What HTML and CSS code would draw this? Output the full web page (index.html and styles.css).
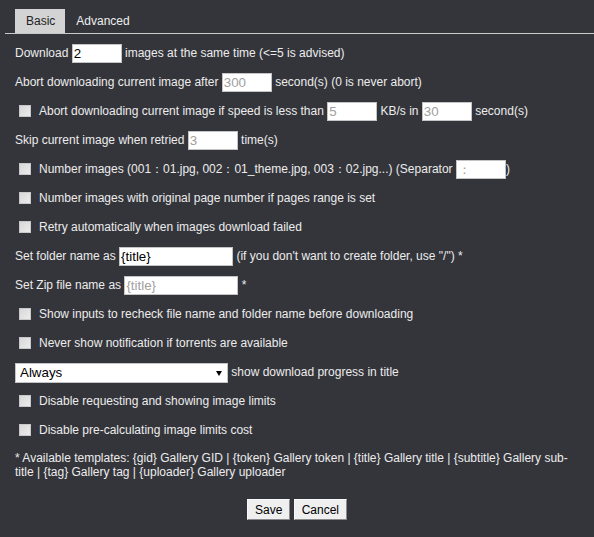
FILE: index.html
```html
<!DOCTYPE html>
<html>
<head>
<meta charset="utf-8">
<link rel="stylesheet" href="styles.css">
</head>
<body>
<div class="tabs">
  <span class="tab active">Basic</span><span class="tab">Advanced</span>
</div>
<div class="content">
  <div class="row">Download <input class="txt" type="text" value="2"> images at the same time (&lt;=5 is advised)</div>
  <div class="row">Abort downloading current image after <input class="txt" type="text" placeholder="300"> second(s) (0 is never abort)</div>
  <div class="row"><input class="cb" type="checkbox">Abort downloading current image if speed is less than <input class="txt" type="text" placeholder="5"> KB/s in <input class="txt" type="text" placeholder="30"> second(s)</div>
  <div class="row">Skip current image when retried <input class="txt" type="text" placeholder="3"> time(s)</div>
  <div class="row"><input class="cb" type="checkbox">Number images (001：01.jpg, 002：01_theme.jpg, 003：02.jpg...) (Separator <input class="txt" type="text" placeholder="：">)</div>
  <div class="row"><input class="cb" type="checkbox">Number images with original page number if pages range is set</div>
  <div class="row"><input class="cb" type="checkbox">Retry automatically when images download failed</div>
  <div class="row">Set folder name as <input class="txt wide" type="text" value="{title}"> (if you don't want to create folder, use "/") *</div>
  <div class="row">Set Zip file name as <input class="txt wide" type="text" placeholder="{title}"> *</div>
  <div class="row"><input class="cb" type="checkbox">Show inputs to recheck file name and folder name before downloading</div>
  <div class="row"><input class="cb" type="checkbox">Never show notification if torrents are available</div>
  <div class="row"><span class="sel"><select><option>Always</option></select></span> show download progress in title</div>
  <div class="row"><input class="cb" type="checkbox">Disable requesting and showing image limits</div>
  <div class="row"><input class="cb" type="checkbox">Disable pre-calculating image limits cost</div>
  <div class="note">* Available templates: {gid} Gallery GID | {token} Gallery token | {title} Gallery title | {subtitle} Gallery sub-title | {tag} Gallery tag | {uploader} Gallery uploader</div>
  <div class="buttons"><button class="btn">Save</button> <button class="btn">Cancel</button></div>
</div>
</body>
</html>
```
FILE: styles.css
```css
html, body {
  margin: 0;
  padding: 0;
  background: #34353b;
}
body {
  font-family: "Liberation Sans", Arial, sans-serif;
  font-size: 12px;
  color: #ececec;
  height: 537px;
}
.tabs {
  display: flex;
  margin-left: 5px;
  padding: 9px 0 0 10px;
  border-bottom: 1px solid #c9c9c9;
}
.tab {
  display: block;
  height: 24px;
  line-height: 24px;
  padding: 0 10px 0 11px;
  color: #eeeeee;
}
.tab.active {
  background: #d3d3d3;
  color: #222222;
}
.content {
  padding: 1px 15px 0;
}
.row {
  height: 21px;
  line-height: 21px;
  margin-top: 8px;
  white-space: nowrap;
}
.txt {
  box-sizing: border-box;
  width: 50px;
  height: 19px;
  margin: 0;
  padding: 0 1px;
  border: 1px solid #c4c4c4;
  background: #ffffff;
  color: #000000;
  font-family: "Liberation Sans", Arial, sans-serif;
  font-size: 13.33px;
  vertical-align: middle;
  outline: none;
}
.txt::placeholder {
  color: #a0a0a0;
}
.txt.wide {
  width: 114px;
}
.cb {
  -webkit-appearance: none;
  appearance: none;
  box-sizing: border-box;
  width: 12px;
  height: 12px;
  margin: 0 8px 0 4px;
  border: 1px solid #c8c8c8;
  background: linear-gradient(135deg, #d8d8d8, #ececec);
  vertical-align: middle;
  position: relative;
  top: -1px;
}
.sel {
  display: inline-block;
  position: relative;
  vertical-align: middle;
}
.sel select {
  -webkit-appearance: none;
  appearance: none;
  box-sizing: border-box;
  width: 213px;
  height: 20px;
  margin: 0;
  padding: 0 4px;
  border: 1px solid #c4c4c4;
  border-radius: 0;
  background: #ffffff;
  color: #000000;
  font-family: "Liberation Sans", Arial, sans-serif;
  font-size: 13.33px;
  display: block;
}
.sel::after {
  content: "";
  position: absolute;
  right: 6px;
  top: 8px;
  border-left: 3.5px solid transparent;
  border-right: 3.5px solid transparent;
  border-top: 5px solid #000000;
}
.note {
  margin-top: 10px;
  line-height: 14px;
}
.buttons {
  margin-top: 20px;
  text-align: center;
}
.btn {
  box-sizing: border-box;
  height: 21px;
  margin: 0;
  padding: 0 7px;
  font-family: "Liberation Sans", Arial, sans-serif;
  font-size: 12px;
  color: #000000;
  background: #efefef;
  border: 1px solid;
  border-color: #f8f8f8 #8a8a8a #8a8a8a #f8f8f8;
  border-radius: 0;
}
```
